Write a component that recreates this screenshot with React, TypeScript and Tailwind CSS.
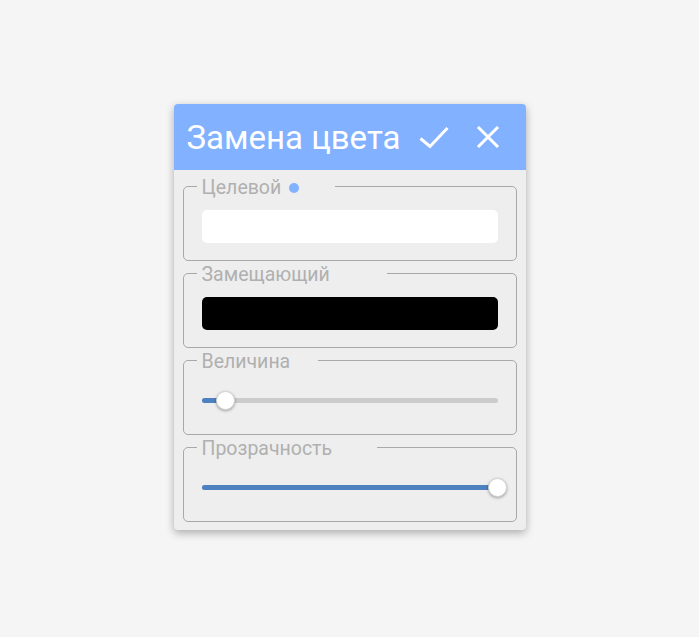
import React from 'react'

const legendCls =
  '-ml-[5px] px-[5px] h-[20px] leading-[20px] text-[19.5px] text-[#b0b0b0] flex items-center'

function ColorField({ label, color, dot, pad }: { label: string; color: string; dot?: boolean; pad: string }) {
  return (
    <fieldset className="border border-[#a8a8a8] rounded-[5px] px-[18px] pt-[14px] pb-[15px] h-[85px]">
      <legend className={legendCls}>
        <span className="relative top-[2px]">{label}</span>
        {dot && <span className="ml-[8px] mt-[3px] inline-block w-[10px] h-[10px] rounded-full bg-[#82b1ff]" />}
        <span className={pad} />
      </legend>
      <div className="h-[33px] rounded-[5px]" style={{ backgroundColor: color }} />
    </fieldset>
  )
}

function SliderField({ label, value, pad }: { label: string; value: number; pad: string }) {
  return (
    <fieldset className="border border-[#a8a8a8] rounded-[5px] px-[18px] pt-[14px] pb-[15px] h-[85px]">
      <legend className={legendCls}>
        <span className="relative top-[2px]">{label}</span>
        <span className={pad} />
      </legend>
      <div className="h-[33px] flex items-center">
        <div className="relative w-full h-[5px] rounded-full bg-[#cbcbcb]">
          <div className="absolute left-0 top-0 h-full rounded-full bg-[#4f80bf]" style={{ width: `${value}%` }} />
          <div
            className="absolute top-1/2 w-[19px] h-[19px] -mt-[9.5px] -ml-[9.5px] rounded-full bg-white border border-[#d6d6d6] shadow-[0_1px_3px_rgba(0,0,0,0.35)]"
            style={{ left: `${value}%` }}
          />
        </div>
      </div>
    </fieldset>
  )
}

export default function App() {
  return (
    <main className="min-h-screen bg-[#f5f5f5] flex items-center justify-center" style={{ fontFamily: 'Roboto, "Noto Sans", sans-serif' }}>
      <div className="w-[352px] -mt-[3px] rounded-[4px] overflow-hidden bg-[#eeeeee] shadow-[0_3px_8px_rgba(0,0,0,0.3)]">
        {/* Header */}
        <div className="h-[66px] bg-[#82b1ff] flex items-center pl-[13px] text-white">
          <h1 className="text-[33px] leading-none">Замена цвета</h1>
          <svg className="ml-[18px] mt-[2px]" width="30" height="24" viewBox="0 0 30 24" fill="none">
            <path d="M1.5 12.5 L11 20.5 L28.5 2" stroke="white" strokeWidth="3" />
          </svg>
          <svg className="ml-[27px]" width="24" height="24" viewBox="0 0 24 24" fill="none">
            <path d="M2 2 L22 22 M22 2 L2 22" stroke="white" strokeWidth="3" />
          </svg>
        </div>

        {/* Fields */}
        <div className="px-[9px] pt-[6px] pb-[8px] flex flex-col gap-[2px]">
          <ColorField label="Целевой" color="#ffffff" dot pad="w-[31px]" />
          <ColorField label="Замещающий" color="#000000" pad="w-[52px]" />
          <SliderField label="Величина" value={8} pad="w-[23px]" />
          <SliderField label="Прозрачность" value={100} pad="w-[40px]" />
        </div>
      </div>
    </main>
  )
}
